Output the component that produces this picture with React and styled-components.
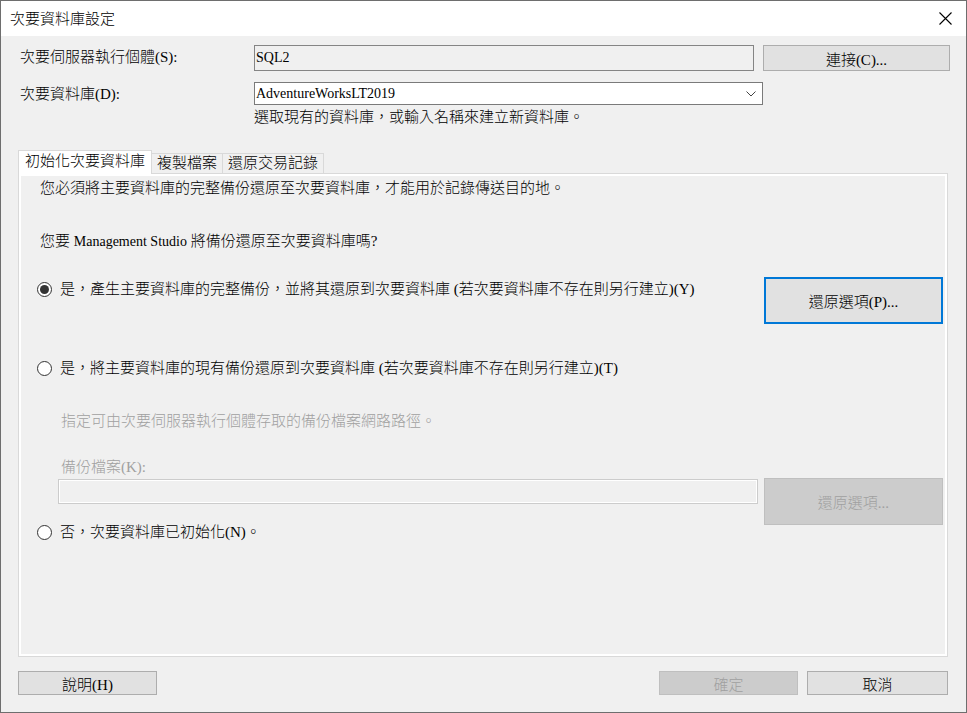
import styled, { createGlobalStyle, css } from 'styled-components'

const GlobalStyle = createGlobalStyle`
	* {
		box-sizing: border-box;
	}
	html,
	body {
		margin: 0;
		padding: 0;
		background: #f0f0f0;
	}
	body {
		font-family: 'Liberation Serif', 'Noto Sans CJK TC', serif;
		font-size: 15px;
		font-weight: 300;
		color: #000;
	}
`

const App = () => {
	return (
		<Window>
			<GlobalStyle />
			<TitleBar>
				<Title>次要資料庫設定</Title>
				<CloseIcon width='13' height='13' viewBox='0 0 13 13'>
					<path d='M0.5 0.5 L12.5 12.5 M12.5 0.5 L0.5 12.5' stroke='#000' strokeWidth='1.1' />
				</CloseIcon>
			</TitleBar>

			<Body>
				<Form>
					<FieldLabel>次要伺服器執行個體(S):</FieldLabel>
					<ReadOnlyBox>SQL2</ReadOnlyBox>
					<Button $col='4'>連接(C)...</Button>

					<FieldLabel>次要資料庫(D):</FieldLabel>
					<DropdownCell>
						<Dropdown>
							<span>AdventureWorksLT2019</span>
							<svg width='10' height='6' viewBox='0 0 10 6'>
								<polyline points='0.5,0.5 5,5 9.5,0.5' fill='none' stroke='#444' strokeWidth='1' />
							</svg>
						</Dropdown>
						<Hint>選取現有的資料庫，或輸入名稱來建立新資料庫。</Hint>
					</DropdownCell>
				</Form>

				<TabStrip>
					<Tab $active>初始化次要資料庫</Tab>
					<Tab>複製檔案</Tab>
					<Tab>還原交易記錄</Tab>
				</TabStrip>

				<TabPanel>
					<Para>您必須將主要資料庫的完整備份還原至次要資料庫，才能用於記錄傳送目的地。</Para>
					<Para $mt='33'>
						您要 <Latin>Management Studio</Latin> 將備份還原至次要資料庫嗎?
					</Para>

					<OptionRow $mt='25'>
						<Radio $mt='2'>
							<RadioDot $checked />
							是，產生主要資料庫的完整備份，並將其還原到次要資料庫 (若次要資料庫不存在則另行建立)(Y)
						</Radio>
						<Button $w='179px' $h='47px' $focus>
							還原選項(P)...
						</Button>
					</OptionRow>

					<Radio $mt='34'>
						<RadioDot />
						是，將主要資料庫的現有備份還原到次要資料庫 (若次要資料庫不存在則另行建立)(T)
					</Radio>

					<MutedText $mt='33'>指定可由次要伺服器執行個體存取的備份檔案網路路徑。</MutedText>
					<MutedText $mt='26'>備份檔案(K):</MutedText>

					<FileGrid>
						<DisabledInput />
						<Button $w='179px' $h='47px' $span disabled>
							還原選項...
						</Button>
						<NoRadio>
							<Radio $mt='18'>
								<RadioDot />
								否，次要資料庫已初始化(N)。
							</Radio>
						</NoRadio>
					</FileGrid>
				</TabPanel>

				<Footer>
					<Button $w='139px'>說明(H)</Button>
					<FooterRight>
						<Button $w='139px' disabled>
							確定
						</Button>
						<Button $w='141px'>取消</Button>
					</FooterRight>
				</Footer>
			</Body>
		</Window>
	)
}

const Window = styled.div`
	width: 967px;
	height: 713px;
	border: 1px solid #6e6e6e;
	display: flex;
	flex-direction: column;
	background: #f0f0f0;
`

const TitleBar = styled.div`
	height: 35px;
	background: #fff;
	display: flex;
	align-items: center;
	justify-content: space-between;
	padding: 0 14px 0 9px;
`

const Title = styled.span`
	font-size: 15px;
	line-height: 20px;
`

const CloseIcon = styled.svg`
	display: block;
`

const Body = styled.div`
	flex: 1;
	display: flex;
	flex-direction: column;
	padding: 9px 18px 17px 17px;
`

const Form = styled.div`
	display: grid;
	grid-template-columns: 234px 500px 9px 1fr;
	grid-template-rows: 26px auto;
	row-gap: 11px;
	margin: 0 -2px 0 2px;
`

const FieldLabel = styled.span`
	grid-column: 1;
	line-height: 24px;
`

const ReadOnlyBox = styled.div`
	grid-column: 2;
	height: 26px;
	border: 1px solid #858585;
	background: #f0f0f0;
	font-size: 14px;
	line-height: 23px;
	padding-left: 1px;
`

const DropdownCell = styled.div`
	grid-column: 2 / span 2;
	display: flex;
	flex-direction: column;
	gap: 2px;
`

const Dropdown = styled.div`
	height: 23px;
	border: 1px solid #7a7a7a;
	background: #fff;
	display: flex;
	align-items: center;
	justify-content: space-between;
	padding: 0 6px 0 1px;
	font-size: 14px;

	svg {
		display: block;
	}
`

const Hint = styled.span`
	line-height: 20px;
`

const TabStrip = styled.div`
	display: flex;
	align-items: flex-end;
	margin-top: 23px;
	margin-bottom: -1px;
	position: relative;
	z-index: 1;
`

const Tab = styled.div`
	border: 1px solid #d9d9d9;
	border-bottom: none;
	line-height: 19px;
	${(p) =>
		p.$active
			? css`
					height: 24px;
					padding: 1px 6px 0;
					background: #fff;
			  `
			: css`
					height: 20px;
					margin-bottom: 1px;
					margin-left: -1px;
					padding: 0 5px;
					background: #f0f0f0;
			  `}
`

const TabPanel = styled.div`
	flex: 1;
	display: flex;
	flex-direction: column;
	border: 1px solid #d9d9d9;
	box-shadow: inset 0 0 0 2px #fff;
	background: #f0f0f0;
	padding: 4px 4px 0 18px;
`

const Para = styled.div`
	line-height: 20px;
	margin-left: 3px;
	margin-top: ${(p) => p.$mt || 0}px;
`

const Latin = styled.span`
	font-size: 14px;
`

const OptionRow = styled.div`
	display: flex;
	align-items: flex-start;
	justify-content: space-between;
	margin-top: ${(p) => p.$mt || 0}px;
`

const Radio = styled.label`
	display: flex;
	align-items: center;
	gap: 8px;
	line-height: 20px;
	margin-top: ${(p) => p.$mt || 0}px;
`

const RadioDot = styled.span`
	width: 15px;
	height: 15px;
	flex: none;
	border-radius: 50%;
	border: 1px solid #333;
	background: #fff;
	display: flex;
	align-items: center;
	justify-content: center;

	&::after {
		content: '';
		display: ${(p) => (p.$checked ? 'block' : 'none')};
		width: 9px;
		height: 9px;
		border-radius: 50%;
		background: #333;
	}
`

const MutedText = styled.div`
	color: #a0a0a0;
	line-height: 20px;
	margin-left: 24px;
	margin-top: ${(p) => p.$mt || 0}px;
`

const FileGrid = styled.div`
	display: grid;
	grid-template-columns: 21px 700px 6px 179px;
	grid-template-rows: 26px auto;
	margin-top: 1px;
`

const DisabledInput = styled.div`
	grid-column: 2;
	grid-row: 1;
	margin-top: 1px;
	height: 25px;
	border: 1px solid #cccccc;
	box-shadow: inset 0 0 0 1px #fff;
	background: #f0f0f0;
`

const NoRadio = styled.div`
	grid-column: 1 / span 3;
	grid-row: 2;
`

const Button = styled.button`
	grid-column: ${(p) => p.$col || 'auto'};
	grid-row: ${(p) => (p.$span ? '1 / span 2' : 'auto')};
	align-self: start;
	width: ${(p) => p.$w || 'auto'};
	height: ${(p) => p.$h || '24px'};
	${(p) => p.$col && 'height: 26px;'}
	margin: 0;
	padding: 0;
	font-family: inherit;
	font-size: 15px;
	font-weight: 300;
	color: #000;
	background: #e1e1e1;
	border: 1px solid #adadad;
	border-radius: 0;
	${(p) =>
		p.$focus &&
		css`
			border: 2px solid #0078d7;
		`}

	&:disabled {
		background: #cccccc;
		border-color: #bfbfbf;
		color: #a0a0a0;
	}
`

const Footer = styled.div`
	display: flex;
	justify-content: space-between;
	margin-top: 14px;
`

const FooterRight = styled.div`
	display: flex;
	gap: 9px;
`

export default App
